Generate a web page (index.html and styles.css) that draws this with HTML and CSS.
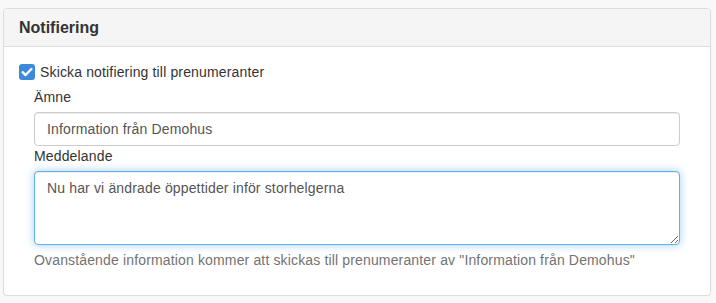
FILE: index.html
```html
<!DOCTYPE html>
<html lang="sv">
<head>
    <meta charset="UTF-8">
    <meta name="viewport" content="width=device-width, initial-scale=1.0">
    <title>Notifiering</title>
    <link rel="stylesheet" href="styles.css">
</head>
<body>
    <div class="panel">
        <div class="panel-heading">
            <h3 class="panel-title">Notifiering</h3>
        </div>
        <div class="panel-body">
            <label class="checkbox">
                <span class="check-box">
                    <svg width="16" height="16" viewBox="0 0 16 16">
                        <rect x="0" y="0" width="16" height="16" rx="3" fill="#3c8ad9"/>
                        <path d="M3.6 8.2 L6.6 11 L12.4 5" fill="none" stroke="#fff" stroke-width="2.4" stroke-linecap="round" stroke-linejoin="round"/>
                    </svg>
                </span>
                Skicka notifiering till prenumeranter
            </label>
            <div class="fields">
                <label class="field-label" for="subject">Ämne</label>
                <input class="form-control" id="subject" type="text" value="Information från Demohus">
                <label class="field-label" for="message">Meddelande</label>
                <textarea class="form-control focus" id="message">Nu har vi ändrade öppettider inför storhelgerna</textarea>
                <p class="help-block">Ovanstående information kommer att skickas till prenumeranter av "Information från Demohus"</p>
            </div>
        </div>
    </div>
</body>
</html>
```

FILE: styles.css
```css
body {
    margin: 0;
    padding: 8px 5px 0 3px;
    background-color: #f8f8f8;
    font-family: 'Liberation Sans', Arial, sans-serif;
    font-size: 14px;
    line-height: 20px;
    letter-spacing: 0.15px;
    color: #333;
}

.panel {
    background-color: #fff;
    border: 1px solid #ddd;
    border-radius: 4px;
    box-shadow: 0 1px 1px rgba(0, 0, 0, 0.05);
}

.panel-heading {
    background-color: #f5f5f5;
    border-bottom: 1px solid #ddd;
    border-radius: 3px 3px 0 0;
    padding: 10px 15px;
}

.panel-title {
    margin: 0;
    font-size: 16px;
    line-height: 17px;
    font-weight: bold;
    letter-spacing: 0;
    color: #333;
}

.panel-body {
    padding: 15px;
}

.checkbox {
    display: flex;
    align-items: center;
    gap: 5px;
    height: 20px;
}

.check-box {
    display: block;
    width: 16px;
    height: 16px;
}

.check-box svg {
    display: block;
}

.fields {
    display: flex;
    flex-direction: column;
    padding: 5px 15px 0 15px;
}

.field-label {
    display: block;
    margin-bottom: 5px;
}

.form-control {
    box-sizing: border-box;
    width: 100%;
    margin: 0;
    padding: 6px 12px;
    font-family: inherit;
    font-size: 14px;
    line-height: 20px;
    letter-spacing: 0.15px;
    color: #555;
    background-color: #fff;
    border: 1px solid #ccc;
    border-radius: 4px;
    box-shadow: inset 0 1px 1px rgba(0, 0, 0, 0.075);
    outline: none;
}

input.form-control {
    height: 34px;
}

textarea.form-control {
    height: 74px;
    resize: vertical;
}

.form-control.focus {
    border-color: #66afe9;
    box-shadow: inset 0 1px 1px rgba(0, 0, 0, 0.075), 0 0 8px rgba(102, 175, 233, 0.6);
}

.help-block {
    margin: 5px 0 10px;
    color: #737373;
}
```
